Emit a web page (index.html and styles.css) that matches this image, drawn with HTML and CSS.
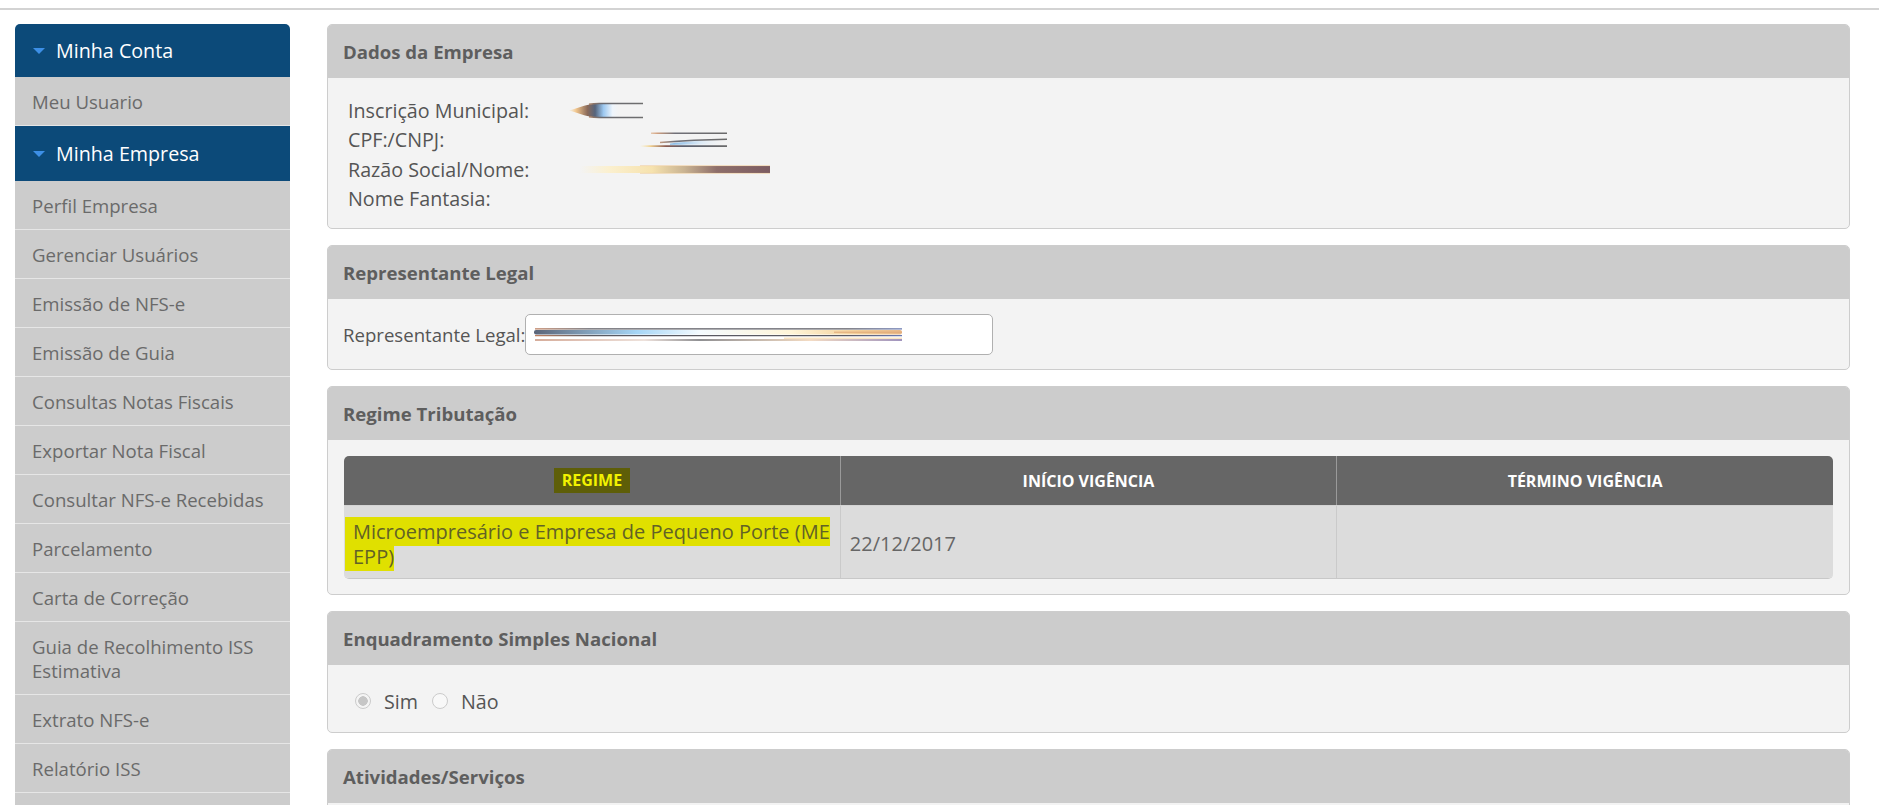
FILE: index.html
```html
<!DOCTYPE html>
<html lang="pt-BR">
<head>
<meta charset="utf-8">
<title>Perfil Empresa</title>
<link rel="stylesheet" href="styles.css">
</head>
<body>
<div class="topbar"></div>
<div class="layout">
  <nav class="sidebar">
    <div class="nav-head first"><span class="caret"></span>Minha Conta</div>
    <a class="nav-item">Meu Usuario</a>
    <div class="nav-head tall"><span class="caret"></span>Minha Empresa</div>
    <a class="nav-item">Perfil Empresa</a>
    <a class="nav-item">Gerenciar Usuários</a>
    <a class="nav-item">Emissão de NFS-e</a>
    <a class="nav-item">Emissão de Guia</a>
    <a class="nav-item">Consultas Notas Fiscais</a>
    <a class="nav-item">Exportar Nota Fiscal</a>
    <a class="nav-item">Consultar NFS-e Recebidas</a>
    <a class="nav-item">Parcelamento</a>
    <a class="nav-item">Carta de Correção</a>
    <a class="nav-item">Guia de Recolhimento ISS Estimativa</a>
    <a class="nav-item">Extrato NFS-e</a>
    <a class="nav-item">Relatório ISS</a>
    <a class="nav-item empty"></a>
  </nav>

  <main class="main">
    <section class="panel">
      <div class="panel-head">Dados da Empresa</div>
      <div class="panel-body dados">
        <div class="drow">
          <span class="dlabel">Inscrição Municipal:</span>
          <span class="dval">
            <svg class="rd" width="76" height="17" viewBox="0 0 76 17">
              <defs>
                <linearGradient id="ga" gradientUnits="userSpaceOnUse" x1="0" y1="0" x2="76" y2="0">
                  <stop offset="0" stop-color="#f8e2b8" stop-opacity="0"/>
                  <stop offset=".12" stop-color="#f1c58c"/>
                  <stop offset=".27" stop-color="#8a6a5a"/>
                  <stop offset=".37" stop-color="#55647c"/>
                  <stop offset=".48" stop-color="#9cc8f0"/>
                  <stop offset=".6" stop-color="#eef5fc"/>
                  <stop offset=".72" stop-color="#f3f3f3" stop-opacity="0"/>
                </linearGradient>
                <linearGradient id="gal" gradientUnits="userSpaceOnUse" x1="20" y1="0" x2="76" y2="0">
                  <stop offset="0" stop-color="#b08060"/>
                  <stop offset=".25" stop-color="#6a6a70"/>
                  <stop offset="1" stop-color="#6e6e6e"/>
                </linearGradient>
              </defs>
              <path d="M2 8.5C12 6 17 2.5 30 1.5L76 1.5L76 15.5L30 15.5C17 14.5 12 11 2 8.5Z" fill="url(#ga)"/>
              <path d="M22 2.2C26 1.6 28 1.5 32 1.5H76M22 14.8C26 15.4 28 15.5 32 15.5H76" stroke="url(#gal)" stroke-width="1.5" fill="none"/>
            </svg>
          </span>
        </div>
        <div class="drow">
          <span class="dlabel">CPF:/CNPJ:</span>
          <span class="dval shift-b">
            <svg class="rd" width="87" height="16" viewBox="0 0 87 16">
              <defs>
                <linearGradient id="gb1" gradientUnits="userSpaceOnUse" x1="0" y1="0" x2="87" y2="0">
                  <stop offset="0" stop-color="#f3c890" stop-opacity="0"/>
                  <stop offset=".2" stop-color="#d0a080"/>
                  <stop offset=".4" stop-color="#707078"/>
                  <stop offset="1" stop-color="#6a6a6a"/>
                </linearGradient>
                <linearGradient id="gb2" gradientUnits="userSpaceOnUse" x1="0" y1="0" x2="87" y2="0">
                  <stop offset="0" stop-color="#f8e8a8" stop-opacity="0"/>
                  <stop offset=".12" stop-color="#f0d090"/>
                  <stop offset=".3" stop-color="#8a5a50"/>
                  <stop offset=".5" stop-color="#5a6070"/>
                  <stop offset="1" stop-color="#6a6a6a"/>
                </linearGradient>
                <linearGradient id="gbw" gradientUnits="userSpaceOnUse" x1="0" y1="0" x2="87" y2="0">
                  <stop offset="0" stop-color="#9cc8f0" stop-opacity="0"/>
                  <stop offset=".4" stop-color="#8fbfe8"/>
                  <stop offset=".7" stop-color="#dceaf6"/>
                  <stop offset="1" stop-color="#f3f3f3" stop-opacity="0"/>
                </linearGradient>
              </defs>
              <path d="M11 1.2H87" stroke="url(#gb1)" stroke-width="1.4"/>
              <path d="M30 11.5C45 9.5 60 8.5 87 8L87 12.5C60 12.5 45 12.5 30 13Z" fill="url(#gbw)"/>
              <path d="M20 10.5C45 8.5 62 7.6 87 7.2" stroke="url(#gb1)" stroke-width="1.5" fill="none"/>
              <path d="M0 14.2H87" stroke="url(#gb2)" stroke-width="1.8"/>
            </svg>
          </span>
        </div>
        <div class="drow">
          <span class="dlabel">Razão Social/Nome:</span>
          <span class="dval shift-c">
            <svg class="rd" width="190" height="9" viewBox="0 0 190 9">
              <defs>
                <linearGradient id="gc" gradientUnits="userSpaceOnUse" x1="0" y1="0" x2="190" y2="0">
                  <stop offset="0" stop-color="#fbf0d0" stop-opacity="0"/>
                  <stop offset=".15" stop-color="#fbf0cf"/>
                  <stop offset=".38" stop-color="#f6e2ae"/>
                  <stop offset=".55" stop-color="#c9b392"/>
                  <stop offset=".72" stop-color="#8e6e6a"/>
                  <stop offset="1" stop-color="#7c5c62"/>
                </linearGradient>
              </defs>
              <rect x="0" y="1" width="190" height="7" fill="url(#gc)"/>
              <path d="M60 0.6H190M60 8.4H190" stroke="#f0c890" stroke-opacity=".7" stroke-width=".8"/>
            </svg>
          </span>
        </div>
        <div class="drow">
          <span class="dlabel">Nome Fantasia:</span>
        </div>
      </div>
    </section>

    <section class="panel">
      <div class="panel-head">Representante Legal</div>
      <div class="panel-body rep">
        <span class="rep-label">Representante Legal:</span>
        <div class="fake-input">
          <svg class="rd" width="368" height="14" viewBox="0 0 368 14">
            <defs>
              <linearGradient id="gi1" gradientUnits="userSpaceOnUse" x1="0" y1="0" x2="368" y2="0">
                <stop offset="0" stop-color="#5a6478"/>
                <stop offset=".28" stop-color="#a6d6f6"/>
                <stop offset=".45" stop-color="#f4fbff"/>
                <stop offset=".7" stop-color="#fff5d8"/>
                <stop offset=".88" stop-color="#f3cf98"/>
                <stop offset="1" stop-color="#e8b888"/>
              </linearGradient>
              <linearGradient id="gi2" gradientUnits="userSpaceOnUse" x1="0" y1="0" x2="368" y2="0">
                <stop offset="0" stop-color="#c89078"/>
                <stop offset=".3" stop-color="#e8d8d0"/>
                <stop offset=".45" stop-color="#6a6a6e"/>
                <stop offset=".75" stop-color="#f0d0b0"/>
                <stop offset="1" stop-color="#8070a8"/>
              </linearGradient>
              <linearGradient id="gi3" gradientUnits="userSpaceOnUse" x1="0" y1="0" x2="368" y2="0">
                <stop offset="0" stop-color="#c08060"/>
                <stop offset=".15" stop-color="#5a5a62"/>
                <stop offset=".85" stop-color="#5a5a62"/>
                <stop offset="1" stop-color="#6878b0"/>
              </linearGradient>
            </defs>
            <path d="M1 0.8H368" stroke="url(#gi3)" stroke-width="1.2"/>
            <rect x="0" y="2" width="368" height="4.5" rx="2" fill="url(#gi1)"/>
            <path d="M300 4.2H368" stroke="#e0a878" stroke-width="1"/>
            <path d="M1 7.6H368" stroke="url(#gi3)" stroke-width="1.2"/>
            <path d="M1 12H368" stroke="url(#gi2)" stroke-width="1.6"/>
            <path d="M250 10.2H368" stroke="#f6d8a8" stroke-width="1"/>
          </svg>
        </div>
      </div>
    </section>

    <section class="panel">
      <div class="panel-head">Regime Tributação</div>
      <div class="panel-body regime">
        <div class="tbl-wrap">
          <table class="tbl">
            <thead>
              <tr>
                <th><mark class="find-cur">REGIME</mark></th>
                <th>INÍCIO VIGÊNCIA</th>
                <th>TÉRMINO VIGÊNCIA</th>
              </tr>
            </thead>
            <tbody>
              <tr>
                <td><mark class="find">Microempresário e Empresa de Pequeno Porte (ME EPP)</mark></td>
                <td>22/12/2017</td>
                <td></td>
              </tr>
            </tbody>
          </table>
        </div>
      </div>
    </section>

    <section class="panel">
      <div class="panel-head">Enquadramento Simples Nacional</div>
      <div class="panel-body radios">
        <label class="radio"><input type="radio" name="simples" checked disabled>Sim</label>
        <label class="radio"><input type="radio" name="simples" disabled>Não</label>
      </div>
    </section>

    <section class="panel">
      <div class="panel-head">Atividades/Serviços</div>
      <div class="panel-body atividades"></div>
    </section>
  </main>
</div>
</body>
</html>
```

FILE: styles.css
```css
html, body {
  margin: 0;
  padding: 0;
  background: #ffffff;
  overflow: hidden;
}

body {
  font-family: "Open Sans", "Liberation Sans", sans-serif;
  color: #5a5a5a;
  height: 805px;
}

.topbar {
  height: 8px;
  border-bottom: 2px solid #d3d3d3;
}

.layout {
  display: flex;
  align-items: flex-start;
  gap: 37px;
  padding: 14px 0 0 15px;
}

/* Sidebar */
.sidebar {
  width: 275px;
  flex: none;
  display: flex;
  flex-direction: column;
}

.nav-head {
  display: flex;
  align-items: center;
  background: #0c4a79;
  color: #ffffff;
  font-size: 19.7px;
  line-height: 25px;
  padding: 14px 17px 14px 18px;
}

.nav-head.first {
  border-radius: 5px 5px 0 0;
}

.nav-head.tall {
  padding-top: 15px;
  padding-bottom: 15px;
}

.caret {
  width: 0;
  height: 0;
  border-left: 6px solid transparent;
  border-right: 6px solid transparent;
  border-top: 6px solid #3d8fe6;
  margin-right: 11px;
}

.nav-item {
  display: block;
  background: #cccccc;
  color: #6a6a6a;
  font-size: 18.6px;
  line-height: 24px;
  padding: 13px 17px 11px 17px;
  border-bottom: 1px solid #e6e6e6;
  text-decoration: none;
}

.nav-item.empty {
  height: 24px;
}

/* Main */
.main {
  width: 1523px;
  flex: none;
  display: flex;
  flex-direction: column;
  gap: 16px;
}

.panel {
  border: 1px solid #cdcdcd;
  border-radius: 5px;
  background: #f3f3f3;
  overflow: hidden;
}

.panel-head {
  background: #cccccc;
  color: #5e5e5e;
  font-weight: 700;
  font-size: 18.6px;
  line-height: 25px;
  padding: 14px 15px 14px 15px;
}

.panel-body {
  color: #555555;
  font-size: 19.7px;
}

/* Dados da Empresa */
.dados {
  padding: 18px 20px 15px 20px;
}

.drow {
  display: grid;
  grid-template-columns: 219px 1fr;
  align-items: center;
  height: 29.3px;
  line-height: 29px;
}

.dval {
  display: flex;
  align-items: center;
}

.shift-b {
  padding-left: 73px;
}

.shift-c {
  padding-left: 13px;
}

.rd {
  display: block;
}

/* Representante */
.rep {
  display: flex;
  align-items: center;
  padding: 15px 15px 14px 15px;
}

.rep-label {
  font-size: 18.6px;
  line-height: 25px;
  white-space: nowrap;
}

.fake-input {
  width: 468px;
  height: 41px;
  box-sizing: border-box;
  background: #ffffff;
  border: 1px solid #b0b0b0;
  border-radius: 5px;
  display: flex;
  align-items: center;
  padding: 1px 0 0 8px;
}

/* Regime */
.regime {
  padding: 16px 16px 15px 16px;
}

.tbl-wrap {
  border-radius: 5px;
  overflow: hidden;
  border-bottom: 1px solid #c8c8c8;
}

.tbl {
  width: 100%;
  border-collapse: collapse;
  table-layout: fixed;
}

.tbl th {
  background: #666666;
  color: #ffffff;
  font-size: 16px;
  font-weight: 700;
  height: 49px;
  padding: 0 8px;
  text-align: center;
  vertical-align: middle;
  border-bottom: 1px solid #d4d4d4;
}

.tbl th + th {
  border-left: 1px solid #9a9a9a;
}

.tbl td {
  background: #dcdcdc;
  color: #666666;
  font-size: 20px;
  line-height: 25px;
  height: 72px;
  box-sizing: border-box;
  padding: 12px 8px 8px 9px;
  vertical-align: middle;
}

.tbl td + td {
  border-left: 1px solid #cacaca;
}

.find-cur {
  display: inline-block;
  background: #5e5e08;
  color: #f2f200;
  line-height: 25px;
  padding: 0 8px;
}

.find {
  background: #e0e000;
  color: #626226;
  padding: 1px 0 1px 8px;
  margin-left: -8px;
  -webkit-box-decoration-break: clone;
  box-decoration-break: clone;
}

/* Radios */
.radios {
  display: flex;
  align-items: center;
  padding: 24px 20px 18px 27px;
  line-height: 25px;
}

.radio {
  display: flex;
  align-items: center;
  margin-right: 14px;
}

.radio input {
  -webkit-appearance: none;
  appearance: none;
  width: 16px;
  height: 16px;
  margin: 0 13px 0 0;
  border: 1px solid #cbcbcb;
  border-radius: 50%;
  background: #f8f8f8;
  box-sizing: border-box;
}

.radio input:checked {
  background: radial-gradient(circle, #c6c6c6 0 4.5px, #f4f4f4 5px);
}

.atividades {
  height: 120px;
}
```
